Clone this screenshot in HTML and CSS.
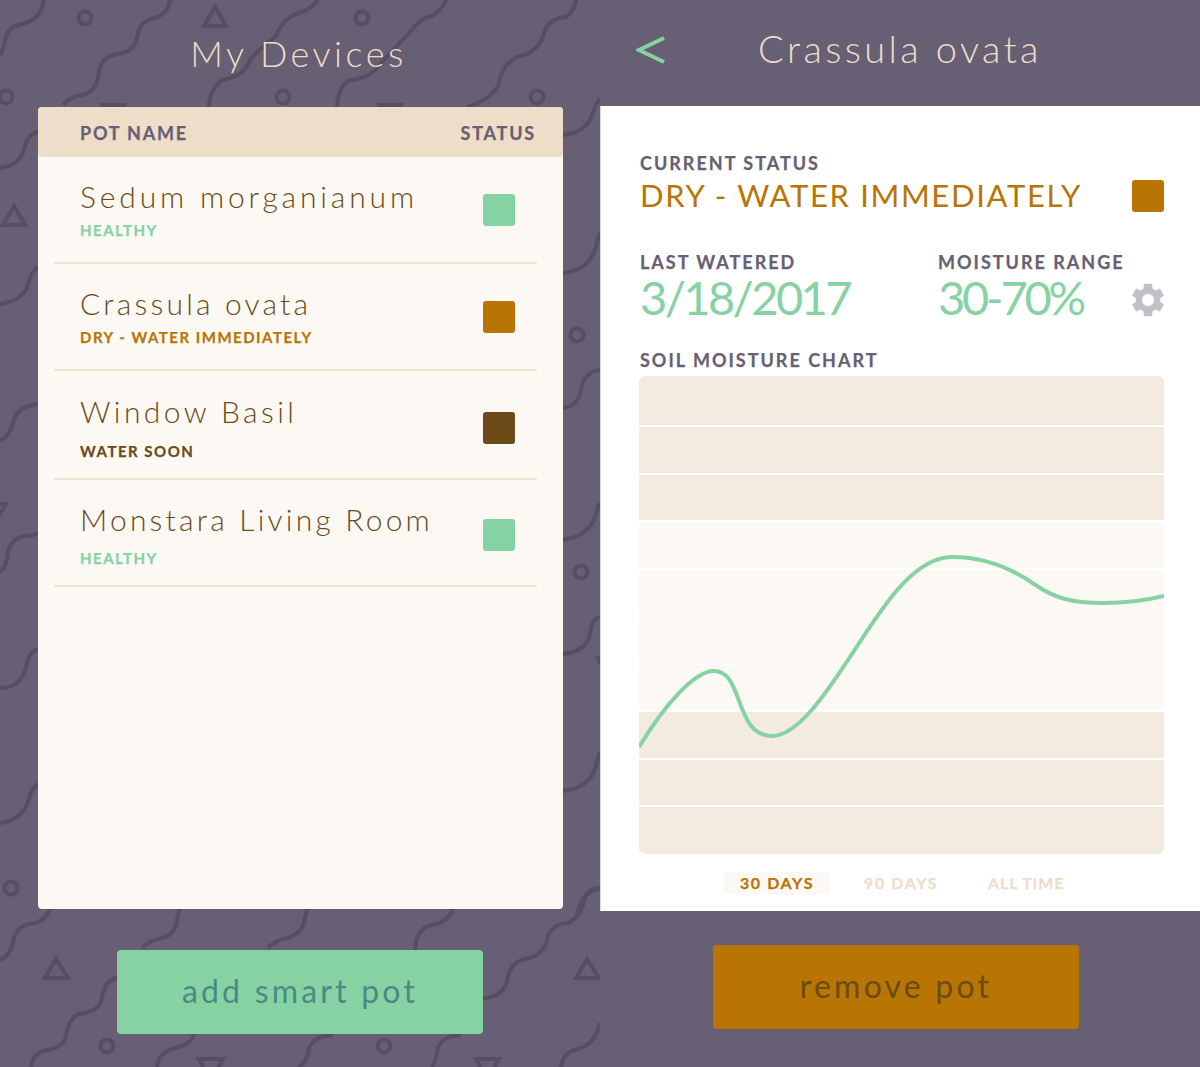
FILE: index.html
```html
<!DOCTYPE html>
<html>
  <head>
    <title>Smart Pot</title>
    <link rel="stylesheet" href="styles.css">
  </head>
  <body>
    <main class="screens">

      <!-- My Devices -->
      <section class="screen screen-devices">
        <svg class="pattern" width="600" height="1067" viewBox="0 0 600 1067" aria-hidden="true">
          <!-- squiggles -->
          <path d="M0 55 Q4 48 6 37 Q9 26 22 24 Q41 20 44 0"/>
          <path d="M63 105 Q70 97 82 95 Q97 92 99 72 Q101 56 118 54 Q136 52 138 33 Q141 20 155 18 Q168 14 170 0"/>
          <path d="M209 107 Q209 90 222 80 Q245 76 250 60 Q258 50 276 36 Q284 16 302 12 Q312 8 318 0"/>
          <path d="M337 107 Q338 86 350 80 Q372 78 382 62 Q395 48 412 30 Q420 18 432 16 Q442 10 446 0"/>
          <path d="M467 107 Q490 100 498 86 Q502 62 520 56 Q540 52 545 30 Q550 18 566 17 Q574 12 576 0"/>
          <path d="M563 135 Q587 132 592 115 Q596 104 600 98"/>
          <path d="M0 168 Q19 166 24 150 Q27 134 38 132"/>
          <path d="M38 267 Q30 274 28 285 Q24 300 0 304"/>
          <path d="M563 273 Q590 270 596 246 Q598 238 600 233"/>
          <path d="M0 441 Q10 436 14 420 Q18 406 38 404"/>
          <path d="M563 408 Q578 406 581 390 Q584 372 600 370"/>
          <path d="M0 572 Q7 566 8 552 Q12 538 24 536 Q32 536 38 533"/>
          <path d="M563 540 Q590 536 596 514 Q598 506 600 503"/>
          <path d="M0 688 Q20 688 26 668 Q28 652 38 649"/>
          <path d="M563 654 Q586 652 590 634 Q592 618 600 617"/>
          <path d="M0 823 Q24 820 29 798 Q32 788 38 784"/>
          <path d="M563 791 Q590 788 596 766 Q598 758 600 752"/>
          <path d="M577 916 Q580 892 600 889"/>
          <path d="M0 960 Q11 956 14 938 Q18 924 36 923 Q48 918 50 908"/>
          <path d="M142 948 Q150 940 162 938 Q176 934 177 920 Q178 914 180 908"/>
          <path d="M268 948 Q276 940 288 938 Q304 932 305 918 Q306 912 308 908"/>
          <path d="M415 950 Q416 926 436 924 Q450 920 453 908"/>
          <path d="M119 977 Q104 980 102 998 Q100 1012 78 1014 Q68 1020 66 1036 Q64 1048 46 1050 Q32 1054 31 1067"/>
          <path d="M481 998 Q506 998 508 976 Q512 960 530 958 Q546 952 548 936 Q552 924 568 923 Q582 916 584 900 Q588 888 600 888"/>
          <path d="M157 1067 Q158 1052 176 1048 Q192 1044 195 1033"/>
          <path d="M298 1067 Q308 1062 309 1048 Q314 1036 333 1035"/>
          <path d="M432 1067 Q436 1060 438 1048 Q442 1036 461 1035"/>
          <path d="M561 1067 Q563 1052 578 1049 Q594 1046 600 1023"/>
          <!-- circles -->
          <circle cx="85" cy="18" r="6.5"/>
          <circle cx="362" cy="18" r="6.5"/>
          <circle cx="6" cy="97" r="6.5"/>
          <circle cx="283" cy="97" r="6.5"/>
          <circle cx="537" cy="97" r="6.5"/>
          <circle cx="577" cy="335" r="6.5"/>
          <circle cx="581" cy="572" r="6.5"/>
          <circle cx="11" cy="888" r="6.5"/>
          <circle cx="107" cy="1046" r="6.5"/>
          <circle cx="384" cy="1046" r="6.5"/>
          <!-- triangles -->
          <path d="M215 7 L204 26 L226 26 Z"/>
          <path d="M14 206 L3 225 L25 225 Z"/>
          <path d="M102 105 L124 105 L113 124 Z"/>
          <path d="M379 105 L401 105 L390 124 Z"/>
          <path d="M-18 504 L6 504 L-6 524 Z"/>
          <path d="M56 959 L45 978 L68 978 Z"/>
          <path d="M587 959 L576 978 L599 978 Z"/>
          <path d="M199 1059 L223 1059 L211 1080 Z"/>
          <path d="M476 1059 L499 1059 L487 1080 Z"/>
          <path d="M598 658 L612 658 L605 672 Z"/>
        </svg>

        <h1 class="screen-title">My Devices</h1>

        <div class="device-card">
          <div class="device-head">
            <span>POT NAME</span>
            <span>STATUS</span>
          </div>
          <ul class="device-list">
            <li class="device device-a">
              <div>
                <div class="device-name">Sedum morganianum</div>
                <div class="device-status text-healthy">HEALTHY</div>
              </div>
              <span class="swatch bg-healthy"></span>
            </li>
            <li class="device device-b">
              <div>
                <div class="device-name">Crassula ovata</div>
                <div class="device-status text-dry">DRY - WATER IMMEDIATELY</div>
              </div>
              <span class="swatch bg-dry"></span>
            </li>
            <li class="device device-c">
              <div>
                <div class="device-name">Window Basil</div>
                <div class="device-status text-soon">WATER SOON</div>
              </div>
              <span class="swatch bg-soon"></span>
            </li>
            <li class="device device-d">
              <div>
                <div class="device-name">Monstara Living Room</div>
                <div class="device-status text-healthy">HEALTHY</div>
              </div>
              <span class="swatch bg-healthy"></span>
            </li>
          </ul>
        </div>

        <button type="button" class="big-button button-add">add smart pot</button>
      </section>

      <!-- Plant detail -->
      <section class="screen screen-detail">
        <header class="detail-head">
          <svg class="back" width="30" height="28" viewBox="0 0 30 28" aria-hidden="true">
            <path d="M28 2 L3 14 L28 26"/>
          </svg>
          <h1 class="screen-title detail-title">Crassula ovata</h1>
        </header>

        <div class="detail-card">
          <div class="label">CURRENT STATUS</div>
          <div class="status-row">
            <div class="status-text">DRY - WATER IMMEDIATELY</div>
            <span class="swatch bg-dry"></span>
          </div>

          <div class="stats">
            <div class="stat-watered">
              <div class="label">LAST WATERED</div>
              <div class="stat-value">3/18/2017</div>
            </div>
            <div class="stat-range">
              <div class="label">MOISTURE RANGE</div>
              <div class="stat-value">30-70%</div>
            </div>
            <svg class="gear" width="32" height="34" viewBox="2.5 2 19 20" aria-hidden="true">
              <path d="M19.14 12.94c.04-.3.06-.61.06-.94 0-.32-.02-.64-.07-.94l2.03-1.58c.18-.14.23-.41.12-.61l-1.92-3.32c-.12-.22-.37-.29-.59-.22l-2.39.96c-.5-.38-1.03-.7-1.62-.94l-.36-2.54c-.04-.24-.24-.41-.48-.41h-3.84c-.24 0-.43.17-.47.41l-.36 2.54c-.59.24-1.13.57-1.62.94l-2.39-.96c-.22-.08-.47 0-.59.22L2.74 8.87c-.12.21-.08.47.12.61l2.03 1.58c-.05.3-.09.63-.09.94s.02.64.07.94l-2.03 1.58c-.18.14-.23.41-.12.61l1.92 3.32c.12.22.37.29.59.22l2.39-.96c.5.38 1.03.7 1.62.94l.36 2.54c.05.24.24.41.48.41h3.84c.24 0 .44-.17.47-.41l.36-2.54c.59-.24 1.13-.56 1.62-.94l2.39.96c.22.08.47 0 .59-.22l1.92-3.32c.12-.22.07-.47-.12-.61l-2.01-1.58zM12 15.6c-1.98 0-3.6-1.62-3.6-3.6s1.62-3.6 3.6-3.6 3.6 1.62 3.6 3.6-1.62 3.6-3.6 3.6z"/>
            </svg>
          </div>

          <div class="label chart-label">SOIL MOISTURE CHART</div>
          <div class="chart">
            <div class="band band-out"></div>
            <div class="band band-out"></div>
            <div class="band band-out"></div>
            <div class="band"></div>
            <div class="band"></div>
            <div class="band"></div>
            <div class="band"></div>
            <div class="band band-out"></div>
            <div class="band band-out"></div>
            <div class="band band-out"></div>
            <svg class="chart-line" width="525" height="478" viewBox="0 0 525 478" aria-hidden="true">
              <path d="M0 371 C25 330 55 295 75 295 C105 295 95 360 133 360 C160 360 190 312 209 284 C235 246 270 181 313 181 C345 181 372 192 395 208 C415 222 432 227 464 227 C485 227 505 225 525 220"/>
            </svg>
          </div>

          <div class="ranges">
            <span class="range range-active">30 DAYS</span>
            <span class="range range-90">90 DAYS</span>
            <span class="range range-all">ALL TIME</span>
          </div>
        </div>

        <button type="button" class="big-button button-remove">remove pot</button>
      </section>

    </main>
  </body>
</html>
```

FILE: styles.css
```css
/* Global styles */
body {
  font-family: Lato, "Open Sans", sans-serif;
  margin: 0;
  padding: 0;
  background-color: #675f73;
}

.screens {
  display: flex;
  width: 1200px;
  height: 1067px;
  overflow: hidden;
}

.screen {
  position: relative;
  width: 600px;
  height: 1067px;
}

/* Background pattern */
.pattern {
  position: absolute;
  top: 0;
  left: 0;
}

.pattern path,
.pattern circle {
  fill: none;
  stroke: #564e61;
  stroke-width: 4;
}

/* Titles */
.screen-title {
  position: relative;
  margin: 0;
  padding-right: 3px;
  color: #eeddc9;
  font-size: 36px;
  font-weight: 300;
  letter-spacing: 3.5px;
  line-height: 44px;
  text-align: center;
}

/* Devices screen */
.screen-devices {
  padding-top: 31px;
  box-sizing: border-box;
}

.device-card {
  position: relative;
  width: 525px;
  height: 802px;
  margin: 32px 0 0 38px;
  border-radius: 4px;
  background-color: #fcf9f4;
}

.device-head {
  display: flex;
  justify-content: space-between;
  height: 50px;
  padding: 0 27px 0 42px;
  border-radius: 4px;
  background-color: #eeddc9;
  color: #675f73;
  font-size: 18px;
  font-weight: 700;
  letter-spacing: 1.8px;
  line-height: 52px;
  -webkit-text-stroke: 0.25px;
}

.device-list {
  list-style: none;
  margin: 1px 26px 0 16px;
  padding: 0;
}

.device {
  display: flex;
  justify-content: space-between;
  align-items: center;
  padding: 20px 22px 23px 26px;
  border-bottom: 2px solid #efe3d0;
}

.device-b {
  padding-top: 21px;
}

.device-c {
  padding-top: 22px;
  padding-bottom: 18px;
}

.device-d {
  padding-top: 21px;
  padding-bottom: 18px;
}

.device-c .device-status {
  margin-top: 13px;
}

.device-d .device-status {
  margin-top: 12px;
}

.device-name {
  color: #6b4a17;
  font-size: 30px;
  font-weight: 300;
  letter-spacing: 3.2px;
  line-height: 36px;
}

.device-a .device-name {
  letter-spacing: 3.85px;
}

.device-c .device-name {
  letter-spacing: 3.4px;
}

.device-status {
  margin-top: 7px;
  font-size: 15px;
  font-weight: 700;
  letter-spacing: 1.5px;
  line-height: 18px;
  -webkit-text-stroke: 0.25px;
}

.text-healthy { color: #86d2a3; }
.text-dry { color: #b87504; }
.text-soon { color: #6b4a17; }

.swatch {
  flex: none;
  width: 32px;
  height: 32px;
  border-radius: 3px;
}

.device .swatch {
  margin-top: 2px;
}

.bg-healthy { background-color: #86d2a3; }
.bg-dry { background-color: #b87504; }
.bg-soon { background-color: #6b4a17; }

/* Buttons */
.big-button {
  display: block;
  position: relative;
  width: 366px;
  height: 84px;
  padding: 0 0 4px;
  border: none;
  border-radius: 4px;
  font-family: Lato, "Open Sans", sans-serif;
  font-size: 32px;
  letter-spacing: 3.2px;
}

.button-add {
  margin: 41px 0 0 117px;
  background-color: #86d2a3;
  color: #4a8a86;
}

.button-remove {
  margin: 34px 0 0 113px;
  background-color: #b87504;
  color: #6b4a17;
}

/* Detail screen */
.detail-head {
  position: relative;
  height: 106px;
}

.detail-title {
  padding-top: 26px;
  padding-right: 0;
  font-size: 38px;
  letter-spacing: 3.4px;
}

.back {
  position: absolute;
  top: 36px;
  left: 36px;
}

.back path {
  fill: none;
  stroke: #86d2a3;
  stroke-width: 4;
}

.detail-card {
  box-sizing: border-box;
  height: 805px;
  padding: 46px 36px 0 39px;
  border-left: 1px solid #dcdade;
  background-color: #fff;
}

.label {
  color: #675f73;
  font-size: 18px;
  font-weight: 700;
  letter-spacing: 2px;
  line-height: 22px;
  -webkit-text-stroke: 0.25px;
}

.status-row {
  display: flex;
  justify-content: space-between;
  align-items: center;
  height: 36px;
  margin-top: 4px;
}

.status-text {
  padding-bottom: 2px;
  color: #b87504;
  font-size: 31px;
  letter-spacing: 1.65px;
}

.stats {
  display: flex;
  position: relative;
  margin-top: 37px;
}

.stat-watered {
  width: 298px;
}

.stat-value {
  margin-top: -1px;
  color: #86d2a3;
  font-size: 47px;
  letter-spacing: -2.6px;
  line-height: 50px;
}

.stat-range .stat-value {
  letter-spacing: -3.2px;
}

.gear {
  position: absolute;
  top: 32px;
  right: 0;
  fill: #c3bfc7;
}

.chart-label {
  margin-top: 27px;
}

.chart {
  display: grid;
  grid-template-rows: 49px repeat(8, 1fr) 47px;
  row-gap: 2px;
  position: relative;
  height: 478px;
  margin: 5px 0 0 -1px;
  border-radius: 6px;
  overflow: hidden;
}

.band {
  background-color: #fcf9f4;
}

.band-out {
  background-color: #f3ebe0;
}

.chart-line {
  position: absolute;
  top: 0;
  left: 0;
}

.chart-line path {
  fill: none;
  stroke: #86d2a3;
  stroke-width: 4;
}

/* Chart range tabs */
.ranges {
  display: flex;
  margin: 18px 0 0 84px;
  color: #eeddc9;
  font-size: 16px;
  font-weight: 700;
  letter-spacing: 1.6px;
  line-height: 22px;
  -webkit-text-stroke: 0.25px;
}

.range-active {
  width: 106px;
  border-radius: 4px;
  background-color: #fcf9f4;
  color: #b87504;
  text-align: center;
}

.range-90 {
  margin-left: 34px;
}

.range-all {
  margin-left: 50px;
  letter-spacing: 0.85px;
}
```
